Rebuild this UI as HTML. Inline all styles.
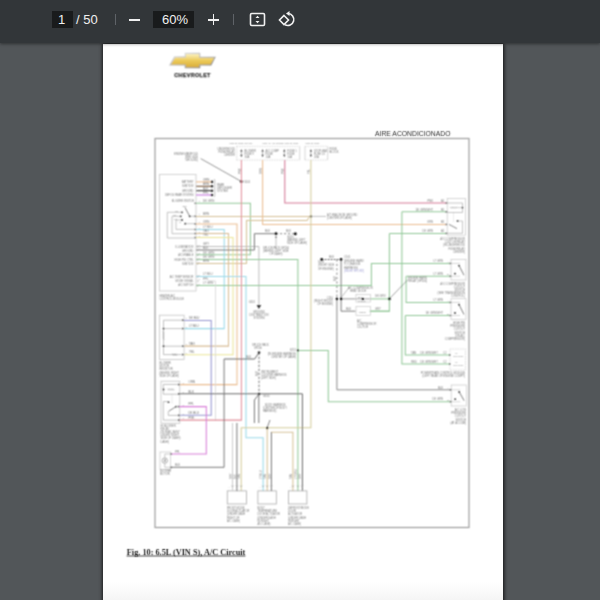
<!DOCTYPE html>
<html><head><meta charset="utf-8">
<style>
html,body{margin:0;padding:0;width:600px;height:600px;overflow:hidden;background:#525659;font-family:"Liberation Sans",sans-serif;}
#tb{position:absolute;left:0;top:0;width:600px;height:43px;background:#323639;box-shadow:0 1px 3px rgba(0,0,0,0.45);z-index:5;}
#page{position:absolute;left:103px;top:44px;width:400px;height:600px;background:linear-gradient(to bottom,#fff 0px,#fff 538px,#f5f5f5 556px);box-shadow:1px 0 4px rgba(0,0,0,0.75),-1px 0 3px rgba(0,0,0,0.45);}
.t{position:absolute;color:#f1f1f1;font-size:13px;}
</style></head><body>
<div id="page"></div>
<div id="tb">
  <div style="position:absolute;left:52px;top:11px;width:21px;height:17px;background:#191b1c;"></div>
  <div class="t" style="left:58px;top:12px;">1</div>
  <div class="t" style="left:76px;top:12px;">/ 50</div>
  <div style="position:absolute;left:115px;top:14px;width:1px;height:11px;background:#5f6368;"></div>
  <div style="position:absolute;left:129px;top:19px;width:11px;height:1.6px;background:#f1f1f1;"></div>
  <div style="position:absolute;left:153px;top:11px;width:41px;height:17px;background:#191b1c;"></div>
  <div class="t" style="left:162px;top:12px;">60%</div>
  <div style="position:absolute;left:208px;top:19px;width:11px;height:1.6px;background:#f1f1f1;"></div>
  <div style="position:absolute;left:212.7px;top:14.3px;width:1.6px;height:11px;background:#f1f1f1;"></div>
  <div style="position:absolute;left:233px;top:14px;width:1px;height:11px;background:#5f6368;"></div>
  <svg width="600" height="43" style="position:absolute;left:0;top:0">
    <rect x="250.5" y="13.5" width="14" height="12" rx="1.2" fill="none" stroke="#f1f1f1" stroke-width="1.6"/>
    <path d="M255.5 18 L257.5 15.8 L259.5 18 Z M255.5 21 L257.5 23.2 L259.5 21 Z" fill="#f1f1f1"/>
    <path d="M284 15.5 L288.5 20 L284 24.5 L279.5 20 Z" fill="none" stroke="#f1f1f1" stroke-width="1.6"/>
    <path d="M288 13.5 A6 6 0 1 1 285 24.8" fill="none" stroke="#f1f1f1" stroke-width="1.6"/>
    <path d="M286 13.5 L289.5 11 L289.5 16 Z" fill="#f1f1f1"/>
  </svg>
</div>
<svg width="600" height="100" style="position:absolute;left:0;top:0">
<defs><filter id="bl2" x="-5%" y="-5%" width="110%" height="110%"><feConvolveMatrix order="3" kernelMatrix="1 2 1 2 4 2 1 2 1" divisor="16" edgeMode="none" preserveAlpha="false"/></filter><linearGradient id="gold" x1="0" y1="0" x2="0" y2="1">
<stop offset="0" stop-color="#faf0c0"/><stop offset="0.5" stop-color="#ecca58"/><stop offset="1" stop-color="#d9ae3c"/></linearGradient>
<linearGradient id="silv" x1="0" y1="0" x2="1" y2="1"><stop offset="0" stop-color="#eeeeee"/><stop offset="1" stop-color="#7a7a7a"/></linearGradient></defs>
<g filter="url(#bl2)"><path d="M169.1,65.4 L174.2,56.2 L184.7,56.2 L184.7,52.8 L200.3,52.8 L200.3,56.7 L215.9,56.7 L211.3,65.4 L200.3,65.4 L200.3,68.3 L184.7,68.3 L184.7,65.4 Z" fill="url(#silv)"/>
<path d="M171,64.4 L175.2,57.4 L185.8,57.4 L185.8,53.9 L199.2,53.9 L199.2,57.8 L214.2,57.8 L210.5,64.4 L199.2,64.4 L199.2,67.2 L185.8,67.2 L185.8,64.4 Z" fill="url(#gold)"/>
<text x="192.5" y="76.5" font-family="Liberation Sans, sans-serif" font-weight="bold" font-size="5.3" fill="#2a2a2a" stroke="#2a2a2a" stroke-width="0.25" text-anchor="middle" letter-spacing="0.35" textLength="36.5" lengthAdjust="spacingAndGlyphs">CHEVROLET</text></g>
</svg>
<svg id="d" width="600" height="600" style="position:absolute;left:0;top:0" font-family="Liberation Sans, sans-serif"><defs><filter id="bl" x="-5%" y="-5%" width="110%" height="110%"><feConvolveMatrix order="3" kernelMatrix="1 2.0 1 2.0 4.0 2.0 1 2.0 1" divisor="16.0" edgeMode="none" preserveAlpha="false"/></filter></defs><g filter="url(#bl)"><rect x="155" y="138.5" width="314" height="389.0" stroke="#9c9c9c" stroke-width="1.2" fill="none"/><polyline points="236.7,146.3 299.7,146.3" stroke="#c4c4c4" stroke-width="0.6" fill="none" stroke-dasharray="1.5,1"/><polyline points="236.7,160 299.7,160" stroke="#c4c4c4" stroke-width="0.6" fill="none" stroke-dasharray="1.5,1"/><polyline points="236.7,146.3 236.7,160" stroke="#c4c4c4" stroke-width="0.6" fill="none" stroke-dasharray="1.5,1"/><polyline points="299.7,146.3 299.7,160" stroke="#c4c4c4" stroke-width="0.7" fill="none"/><polyline points="305,146.3 327.7,146.3" stroke="#c4c4c4" stroke-width="0.6" fill="none" stroke-dasharray="1.5,1"/><polyline points="305,160 327.7,160" stroke="#c4c4c4" stroke-width="0.6" fill="none" stroke-dasharray="1.5,1"/><polyline points="305,146.3 305,160" stroke="#c4c4c4" stroke-width="0.7" fill="none"/><polyline points="327.7,146.3 327.7,160" stroke="#c4c4c4" stroke-width="0.7" fill="none"/><path d="M240.3,151.5 L242.5,151.5 L241.4,149.3 Z M240.3,154.8 L242.5,154.8 L241.4,157 Z" fill="#333"/><polyline points="241.4,151.5 241.4,154.8" stroke="#666" stroke-width="0.5" fill="none"/><path d="M261.5,151.5 L263.70000000000005,151.5 L262.6,149.3 Z M261.5,154.8 L263.70000000000005,154.8 L262.6,157 Z" fill="#333"/><polyline points="262.6,151.5 262.6,154.8" stroke="#666" stroke-width="0.5" fill="none"/><path d="M283.2,151.5 L285.40000000000003,151.5 L284.3,149.3 Z M283.2,154.8 L285.40000000000003,154.8 L284.3,157 Z" fill="#333"/><polyline points="284.3,151.5 284.3,154.8" stroke="#666" stroke-width="0.5" fill="none"/><path d="M309.79999999999995,151.5 L312.0,151.5 L310.9,149.3 Z M309.79999999999995,154.8 L312.0,154.8 L310.9,157 Z" fill="#333"/><polyline points="310.9,151.5 310.9,154.8" stroke="#666" stroke-width="0.5" fill="none"/><polyline points="200.7,158.6 241.2,181.4" stroke="#6a6a6a" stroke-width="0.7" fill="none"/><circle cx="241.4" cy="181.4" r="1.5" fill="#111"/><rect x="159.5" y="174.4" width="36.5" height="116.6" stroke="#cfcfcf" stroke-width="0.9" fill="none"/><polyline points="196,181.9 212,181.9" stroke="#ebbd92" stroke-width="1.1" fill="none"/><circle cx="212" cy="181.9" r="1.3" fill="#333"/><polyline points="196,186.3 212,186.3" stroke="#7a5a3a" stroke-width="1.1" fill="none"/><circle cx="212" cy="186.3" r="1.3" fill="#333"/><polyline points="196,190.7 212,190.7" stroke="#333" stroke-width="1.1" fill="none"/><circle cx="212" cy="190.7" r="1.3" fill="#333"/><polyline points="196,195 212,195" stroke="#c77ae0" stroke-width="1.1" fill="none"/><circle cx="212" cy="195" r="1.3" fill="#333"/><polyline points="214,179 214.8,180 214.8,196 214,197" stroke="#999" stroke-width="0.6" fill="none"/><polyline points="182,212.3 167.3,212.3 167.3,238 196,238" stroke="#b5b5b5" stroke-width="0.8" fill="none"/><polyline points="180.7,216.3 172,216.3 172,233.7 196,233.7" stroke="#b5b5b5" stroke-width="0.8" fill="none"/><polyline points="182,220 176,220 176,229.4 196,229.4" stroke="#b5b5b5" stroke-width="0.8" fill="none"/><polyline points="185.3,223.7 196,223.7" stroke="#b5b5b5" stroke-width="0.8" fill="none"/><polyline points="189.7,216.3 185,207.5" stroke="#6a6a6a" stroke-width="0.8" fill="none"/><polyline points="189.7,216.3 196,216.3" stroke="#b5b5b5" stroke-width="0.8" fill="none"/><circle cx="182" cy="212.3" r="0.9" fill="#333"/><circle cx="180.7" cy="216.3" r="0.9" fill="#333"/><circle cx="182" cy="220" r="0.9" fill="#333"/><circle cx="185.3" cy="223.7" r="0.9" fill="#333"/><circle cx="189.7" cy="216.3" r="0.9" fill="#333"/><polyline points="196,203.3 250.4,203.3 250.4,254.8 196,254.8" stroke="#92c898" stroke-width="1.05" fill="none"/><polyline points="196,216.4 310.9,216.4" stroke="#d6c298" stroke-width="1.05" fill="none"/><circle cx="310.9" cy="216.4" r="1.2" fill="#333"/><polyline points="312,216.4 326,216.4" stroke="#999" stroke-width="0.6" fill="none"/><polyline points="309,217.5 307,220.5 246.5,220.5 246.5,263.5 196,263.5" stroke="#d6c298" stroke-width="1.05" fill="none"/><polyline points="196,224 237,224 237,384.6 179.3,384.6" stroke="#ebbd92" stroke-width="1.05" fill="none"/><polyline points="196,229.5 224.2,229.5 224.2,328.6 184,328.6" stroke="#9ad9e8" stroke-width="1.05" fill="none"/><polyline points="196,233.5 228.5,233.5 228.5,346.1 184,346.1" stroke="#d8bc94" stroke-width="1.05" fill="none"/><polyline points="196,237.5 233,237.5 233,354.8 184,354.8" stroke="#ece596" stroke-width="1.05" fill="none"/><polyline points="196,246.5 258.9,246.5 258.9,306" stroke="#b5b5b5" stroke-width="0.9" fill="none"/><path d="M256.6,305 L261.2,305 L258.9,309 Z" fill="#333"/><polyline points="196,250 254.4,250 254.4,233.7 276,233.7" stroke="#6a6a6a" stroke-width="0.9" fill="none"/><polyline points="276,233.7 295.3,233.7" stroke="#6a6a6a" stroke-width="0.8" fill="none" stroke-dasharray="2.2,1.8"/><circle cx="276" cy="233.7" r="1.4" fill="#111"/><circle cx="295.3" cy="233.7" r="1.5" fill="#111"/><circle cx="276" cy="237" r="0.8" fill="#333"/><polyline points="276,237 276,246.5" stroke="#999" stroke-width="0.6" fill="none"/><polyline points="196,259.5 297.9,259.5 297.9,491" stroke="#92c898" stroke-width="1.05" fill="none"/><polyline points="196,276.5 246,276.5 246,437.8 263.1,437.8 263.1,491" stroke="#9ad9e8" stroke-width="1.05" fill="none"/><polyline points="196,285.5 371.4,285.5 371.4,263.5 451,263.5" stroke="#92c898" stroke-width="1.05" fill="none"/><polyline points="208,281 215.5,281 215.5,421" stroke="#d4d4d4" stroke-width="0.8" fill="none"/><polyline points="241.4,160 241.4,420.1 179.3,420.1" stroke="#e2909c" stroke-width="1.05" fill="none"/><polyline points="262.6,160 262.6,224.4 447.2,224.4" stroke="#ebbd92" stroke-width="1.05" fill="none"/><polyline points="284.8,160 284.8,203 447.2,203" stroke="#d47896" stroke-width="1.05" fill="none"/><polyline points="310.9,160 310.9,427.7 241.2,427.7 241.2,491" stroke="#d4cd9c" stroke-width="1.05" fill="none"/><polyline points="267.2,427.7 267.2,491" stroke="#d6c298" stroke-width="1.05" fill="none"/><polyline points="271,432.3 292.9,432.3 292.9,491" stroke="#d6c298" stroke-width="1.05" fill="none"/><polyline points="401.9,211.8 447.2,211.8" stroke="#92c898" stroke-width="1.05" fill="none"/><polyline points="401.9,211.8 401.9,364 450,364" stroke="#92c898" stroke-width="1.05" fill="none"/><polyline points="389.4,233.4 447.2,233.4" stroke="#92c898" stroke-width="1.05" fill="none"/><polyline points="389.4,233.4 389.4,311.3 369.6,311.3" stroke="#92c898" stroke-width="1.05" fill="none"/><polyline points="406.1,276.3 451,276.3" stroke="#92c898" stroke-width="1.05" fill="none"/><polyline points="406.1,276.3 406.1,302.4 451,302.4" stroke="#92c898" stroke-width="1.05" fill="none"/><polyline points="405.3,315.4 451,315.4" stroke="#92c898" stroke-width="1.05" fill="none"/><polyline points="405.3,315.4 405.3,355 450,355" stroke="#92c898" stroke-width="1.05" fill="none"/><polyline points="297.9,350.4 328.3,350.4 328.3,401.7 451.2,401.7" stroke="#92c898" stroke-width="1.05" fill="none"/><circle cx="297.9" cy="350.4" r="1.1" fill="#333"/><polyline points="321.7,259.5 341.1,259.5" stroke="#333" stroke-width="0.8" fill="none" stroke-dasharray="1.8,1.2"/><circle cx="321.7" cy="259.5" r="1.4" fill="#111"/><circle cx="341.1" cy="259.5" r="1.4" fill="#111"/><polyline points="336.9,259.5 336.9,298.9" stroke="#6a6a6a" stroke-width="0.85" fill="none" stroke-dasharray="2,2.4"/><polyline points="336.9,298.9 336.9,389.8 451.2,389.8" stroke="#8a8a8a" stroke-width="1.0" fill="none"/><polyline points="341.1,259.5 341.1,311.2 355.6,311.2" stroke="#6a6a6a" stroke-width="0.85" fill="none"/><polyline points="341.1,298.9 355.6,298.9" stroke="#6a6a6a" stroke-width="0.7" fill="none"/><polyline points="355.6,298.9 370.5,298.9" stroke="#6a6a6a" stroke-width="0.6" fill="none"/><polyline points="370.5,298.9 389.4,298.9" stroke="#92c898" stroke-width="1.05" fill="none"/><polyline points="370.5,311.2 389.4,311.2" stroke="#92c898" stroke-width="1.05" fill="none"/><circle cx="336.9" cy="298.9" r="1.3" fill="#111"/><circle cx="341.1" cy="298.9" r="1.3" fill="#111"/><circle cx="362.8" cy="298.9" r="1.2" fill="#111"/><circle cx="389.4" cy="298.9" r="1.4" fill="#111"/><rect x="356" y="294.5" width="14.5" height="7.5" stroke="#c0c0c0" stroke-width="0.6" fill="none"/><rect x="356" y="306.5" width="14.5" height="9.0" stroke="#c0c0c0" stroke-width="0.6" fill="none"/><polyline points="342,296.5 349.5,287" stroke="#777" stroke-width="0.5" fill="none"/><rect x="447.2" y="198.5" width="18.30000000000001" height="36.69999999999999" stroke="#c6c6c6" stroke-width="0.7" fill="none"/><polyline points="447.2,203 462.5,203 462.5,212.5 447.2,212.5" stroke="#999" stroke-width="0.55" fill="none"/><circle cx="462.5" cy="207.6" r="0.9" fill="#333"/><path d="M450,207.6 l0.6,-0.7 l0.8,1.4 l0.8,-1.4 l0.8,1.4 l0.8,-1.4 l0.8,1.4 l0.8,-1.4 l0.8,1.4 l0.8,-1.4 l0.6,0.7 L462.5,207.6" fill="none" stroke="#888" stroke-width="0.4"/><polyline points="453.5,212.5 453.5,222.5" stroke="#aaa" stroke-width="0.45" fill="none" stroke-dasharray="1,1"/><polyline points="449,224.4 457,228.6" stroke="#555" stroke-width="0.7" fill="none"/><circle cx="457.6" cy="221" r="0.9" fill="#333"/><polyline points="457.6,221 462.5,221 462.5,233.3 447.2,233.3" stroke="#999" stroke-width="0.55" fill="none"/><path d="M445.6,201.9 L447.6,203 L445.6,204.1 Z" fill="#666"/><path d="M445.6,210.70000000000002 L447.6,211.8 L445.6,212.9 Z" fill="#666"/><path d="M445.6,223.3 L447.6,224.4 L445.6,225.5 Z" fill="#666"/><path d="M445.6,232.20000000000002 L447.6,233.3 L445.6,234.4 Z" fill="#666"/><rect x="451" y="259.3" width="15" height="20.69999999999999" stroke="#c6c6c6" stroke-width="0.7" fill="none"/><polyline points="451,263.4 460,263.4" stroke="#aaa" stroke-width="0.45" fill="none"/><polyline points="451,276.2 460,276.2" stroke="#aaa" stroke-width="0.45" fill="none"/><polyline points="459,265.59999999999997 464,275.2" stroke="#555" stroke-width="0.75" fill="none"/><circle cx="459" cy="265.59999999999997" r="0.9" fill="#333"/><circle cx="455" cy="273.7" r="0.9" fill="#333"/><path d="M449.6,262.29999999999995 L451.6,263.4 L449.6,264.5 Z" fill="#666"/><path d="M449.6,275.09999999999997 L451.6,276.2 L449.6,277.3 Z" fill="#666"/><rect x="451" y="298.7" width="15" height="20.600000000000023" stroke="#c6c6c6" stroke-width="0.7" fill="none"/><polyline points="451,302.4 460,302.4" stroke="#aaa" stroke-width="0.45" fill="none"/><polyline points="451,315.5 460,315.5" stroke="#aaa" stroke-width="0.45" fill="none"/><polyline points="459,304.59999999999997 464,314.5" stroke="#555" stroke-width="0.75" fill="none"/><circle cx="459" cy="304.59999999999997" r="0.9" fill="#333"/><circle cx="455" cy="313.0" r="0.9" fill="#333"/><path d="M449.6,301.29999999999995 L451.6,302.4 L449.6,303.5 Z" fill="#666"/><path d="M449.6,314.4 L451.6,315.5 L449.6,316.6 Z" fill="#666"/><rect x="450" y="349" width="15.5" height="21" stroke="#c6c6c6" stroke-width="0.6" fill="none" stroke-dasharray="1.5,1"/><rect x="451.2" y="385" width="15.100000000000023" height="21" stroke="#c6c6c6" stroke-width="0.7" fill="none"/><polyline points="451.2,389.8 460.2,389.8" stroke="#aaa" stroke-width="0.45" fill="none"/><polyline points="451.2,401.7 460.2,401.7" stroke="#aaa" stroke-width="0.45" fill="none"/><polyline points="459.2,392.0 464.2,400.7" stroke="#555" stroke-width="0.75" fill="none"/><circle cx="459.2" cy="392.0" r="0.9" fill="#333"/><circle cx="455.2" cy="399.2" r="0.9" fill="#333"/><path d="M449.8,388.7 L451.8,389.8 L449.8,390.90000000000003 Z" fill="#666"/><path d="M449.8,400.59999999999997 L451.8,401.7 L449.8,402.8 Z" fill="#666"/><path d="M449,353.9 L451,355 L449,356.1 Z" fill="#555"/><path d="M449,362.9 L451,364 L449,365.1 Z" fill="#555"/><polyline points="407.7,279.8 389.4,298.8" stroke="#6a6a6a" stroke-width="0.6" fill="none"/><rect x="159.4" y="315.2" width="24.69999999999999" height="44.19999999999999" stroke="#c4c4c4" stroke-width="0.8" fill="none"/><polyline points="184,320.2 163.5,320.2 163.5,354.6 184,354.6" stroke="#999" stroke-width="0.6" fill="none"/><polyline points="163.5,328.6 184,328.6" stroke="#999" stroke-width="0.6" fill="none"/><polyline points="163.5,346.2 184,346.2" stroke="#999" stroke-width="0.6" fill="none"/><circle cx="163.5" cy="328.6" r="0.9" fill="#333"/><circle cx="163.5" cy="346.2" r="0.9" fill="#333"/><path d="M163.5,331 l-0.8,1 l1.6,1 l-1.6,1 l1.6,1 l-1.6,1 l1.6,1 l-1.6,1 l1.6,1 l-0.8,1" fill="none" stroke="#888" stroke-width="0.4"/><path d="M172,354.6 l0.6,-0.8 l0.8,1.6 l0.8,-1.6 l0.8,1.6 l0.8,-1.6 l0.8,1.6 l0.6,-0.8" fill="none" stroke="#777" stroke-width="0.4"/><path d="M182.2,319.09999999999997 L184.2,320.2 L182.2,321.3 Z" fill="#555"/><path d="M182.2,327.5 L184.2,328.6 L182.2,329.70000000000005 Z" fill="#555"/><path d="M182.2,345.09999999999997 L184.2,346.2 L182.2,347.3 Z" fill="#555"/><path d="M182.2,353.5 L184.2,354.6 L182.2,355.70000000000005 Z" fill="#555"/><polyline points="184,320.4 211.2,320.4 211.2,415.3 179.3,415.3" stroke="#9696d0" stroke-width="1.05" fill="none"/><rect x="161" y="381.2" width="18.80000000000001" height="42.0" stroke="#c4c4c4" stroke-width="0.8" fill="none"/><polyline points="179.8,384.4 163.3,384.4 163.3,394.2 179.8,394.2" stroke="#999" stroke-width="0.6" fill="none"/><circle cx="163.5" cy="389.5" r="0.9" fill="#333"/><path d="M167.5,389.5 l0.6,-0.8 l0.8,1.6 l0.8,-1.6 l0.8,1.6 l0.8,-1.6 l0.8,1.6 l0.8,-1.6 l0.8,1.6 l0.6,-0.8" fill="none" stroke="#888" stroke-width="0.4"/><polyline points="172,394.2 172,404" stroke="#aaa" stroke-width="0.5" fill="none" stroke-dasharray="1,1"/><circle cx="168.5" cy="402.2" r="0.9" fill="#333"/><circle cx="176" cy="406.6" r="0.9" fill="#333"/><polyline points="176,406.6 168.8,411.2" stroke="#555" stroke-width="0.7" fill="none"/><polyline points="168.3,411.2 168.3,415.4 179.8,415.4" stroke="#999" stroke-width="0.6" fill="none"/><polyline points="168.3,401.6 163.3,401.6 163.3,420.1 179.8,420.1" stroke="#999" stroke-width="0.6" fill="none"/><polyline points="176,406.6 179.8,406.6" stroke="#999" stroke-width="0.6" fill="none"/><path d="M178,383.5 L180,384.6 L178,385.70000000000005 Z" fill="#555"/><path d="M178,392.7 L180,393.8 L178,394.90000000000003 Z" fill="#555"/><path d="M178,405.5 L180,406.6 L178,407.70000000000005 Z" fill="#555"/><path d="M178,414.2 L180,415.3 L178,416.40000000000003 Z" fill="#555"/><path d="M178,419.0 L180,420.1 L178,421.20000000000005 Z" fill="#555"/><polyline points="179.3,393.8 302.4,393.8 302.4,491" stroke="#6a6a6a" stroke-width="1.0" fill="none"/><polyline points="179.3,406.6 206.3,406.6 206.3,454 171,454" stroke="#d87ed8" stroke-width="1.05" fill="none"/><polyline points="224.1,359 254.6,359 259,352.6" stroke="#6a6a6a" stroke-width="1.0" fill="none"/><polyline points="224.1,359 224.1,467.3 171,467.3" stroke="#6a6a6a" stroke-width="0.9" fill="none"/><polyline points="259,352.6 259,394" stroke="#6a6a6a" stroke-width="0.9" fill="none" stroke-dasharray="2.4,1.6"/><circle cx="259" cy="352.6" r="1.3" fill="#333"/><circle cx="259" cy="394" r="1.3" fill="#333"/><polyline points="259,394 254.4,400 254.4,423" stroke="#6a6a6a" stroke-width="0.9" fill="none"/><polyline points="258.8,394 258.8,423" stroke="#6a6a6a" stroke-width="0.9" fill="none"/><polyline points="270,420 267,428" stroke="#6a6a6a" stroke-width="0.8" fill="none"/><circle cx="267.2" cy="428" r="1.2" fill="#333"/><rect x="160" y="452" width="10.699999999999989" height="17.30000000000001" stroke="#c6c6c6" stroke-width="0.7" fill="none"/><circle cx="164.8" cy="460.6" r="2.7" fill="none" stroke="#777" stroke-width="0.6"/><polyline points="164.8,454 170.7,454" stroke="#999" stroke-width="0.5" fill="none"/><polyline points="164.8,467.3 170.7,467.3" stroke="#999" stroke-width="0.5" fill="none"/><polyline points="164.8,454 164.8,457.9" stroke="#999" stroke-width="0.5" fill="none"/><polyline points="164.8,463.3 164.8,467.3" stroke="#999" stroke-width="0.5" fill="none"/><path d="M171.8,452.9 L169.8,454 L171.8,455.1 Z" fill="#666"/><path d="M171.8,466.2 L169.8,467.3 L171.8,468.40000000000003 Z" fill="#666"/><rect x="227.3" y="490.9" width="19.19999999999999" height="13.100000000000023" stroke="#aaa" stroke-width="0.8" fill="none"/><rect x="257.9" y="490.9" width="18.400000000000034" height="13.100000000000023" stroke="#aaa" stroke-width="0.8" fill="none"/><rect x="288.5" y="490.9" width="18.399999999999977" height="13.100000000000023" stroke="#aaa" stroke-width="0.8" fill="none"/><polyline points="232.5,423 232.5,491" stroke="#c8c8c8" stroke-width="0.9" fill="none"/><polyline points="236.9,423 236.9,491" stroke="#6a6a6a" stroke-width="0.9" fill="none"/><polyline points="271.4,432 271.4,491" stroke="#6a6a6a" stroke-width="0.9" fill="none"/><path d="M194.6,202.3 L196.4,203.3 L194.6,204.3 Z" fill="#555"/><path d="M194.6,215.3 L196.4,216.3 L194.6,217.3 Z" fill="#555"/><path d="M194.6,223.0 L196.4,224 L194.6,225.0 Z" fill="#555"/><path d="M194.6,228.5 L196.4,229.5 L194.6,230.5 Z" fill="#555"/><path d="M194.6,232.5 L196.4,233.5 L194.6,234.5 Z" fill="#555"/><path d="M194.6,236.5 L196.4,237.5 L194.6,238.5 Z" fill="#555"/><path d="M197,245.3 L198.6,246.5 L197,247.7" fill="none" stroke="#999" stroke-width="0.5"/><path d="M197,248.8 L198.6,250 L197,251.2" fill="none" stroke="#999" stroke-width="0.5"/><path d="M197,253.60000000000002 L198.6,254.8 L197,256.0" fill="none" stroke="#999" stroke-width="0.5"/><path d="M197,258.3 L198.6,259.5 L197,260.7" fill="none" stroke="#999" stroke-width="0.5"/><path d="M197,262.3 L198.6,263.5 L197,264.7" fill="none" stroke="#999" stroke-width="0.5"/><path d="M197,275.3 L198.6,276.5 L197,277.7" fill="none" stroke="#999" stroke-width="0.5"/><path d="M197,279.8 L198.6,281 L197,282.2" fill="none" stroke="#999" stroke-width="0.5"/><path d="M197,284.3 L198.6,285.5 L197,286.7" fill="none" stroke="#999" stroke-width="0.5"/><path d="M231.5,485.5 L232.5,487 L233.5,485.5" fill="none" stroke="#999" stroke-width="0.5"/><path d="M235.9,485.5 L236.9,487 L237.9,485.5" fill="none" stroke="#999" stroke-width="0.5"/><path d="M240.2,485.5 L241.2,487 L242.2,485.5" fill="none" stroke="#999" stroke-width="0.5"/><path d="M262.1,485.5 L263.1,487 L264.1,485.5" fill="none" stroke="#999" stroke-width="0.5"/><path d="M266.2,485.5 L267.2,487 L268.2,485.5" fill="none" stroke="#999" stroke-width="0.5"/><path d="M270.4,485.5 L271.4,487 L272.4,485.5" fill="none" stroke="#999" stroke-width="0.5"/><path d="M291.9,485.5 L292.9,487 L293.9,485.5" fill="none" stroke="#999" stroke-width="0.5"/><path d="M296.9,485.5 L297.9,487 L298.9,485.5" fill="none" stroke="#999" stroke-width="0.5"/><path d="M301.2,485.5 L302.2,487 L303.2,485.5" fill="none" stroke="#999" stroke-width="0.5"/><text x="229" y="144.3" font-size="2.45" fill="#777" text-anchor="start">HOT IN RUN, START</text><text x="262" y="144.3" font-size="2.45" fill="#777" text-anchor="start">HOT AT ALL TIMES  HOT IN RUN</text><text x="305" y="144.3" font-size="2.45" fill="#777" text-anchor="start">HOT IN RUN</text><text x="235" y="150" font-size="2.7" fill="#777" text-anchor="end">UNDERHOOD</text><text x="235" y="153.2" font-size="2.7" fill="#777" text-anchor="end">FUSE/RELAY</text><text x="235" y="156.4" font-size="2.7" fill="#777" text-anchor="end">CENTER</text><text x="244.4" y="151.5" font-size="2.7" fill="#777" text-anchor="start">BLOWER</text><text x="244.4" y="154.7" font-size="2.7" fill="#777" text-anchor="start">FUSE 9</text><text x="244.4" y="157.9" font-size="2.7" fill="#777" text-anchor="start">30A</text><text x="265.6" y="151.5" font-size="2.7" fill="#777" text-anchor="start">A/C COMP</text><text x="265.6" y="154.7" font-size="2.7" fill="#777" text-anchor="start">FUSE</text><text x="265.6" y="157.9" font-size="2.7" fill="#777" text-anchor="start">10A</text><text x="287.3" y="151.5" font-size="2.7" fill="#777" text-anchor="start">FUSE 1</text><text x="287.3" y="154.7" font-size="2.7" fill="#777" text-anchor="start">FUSE</text><text x="287.3" y="157.9" font-size="2.7" fill="#777" text-anchor="start">10A</text><text x="313.9" y="151.5" font-size="2.7" fill="#777" text-anchor="start">STOP-HAZ</text><text x="313.9" y="154.7" font-size="2.7" fill="#777" text-anchor="start">FUSE 13</text><text x="313.9" y="157.9" font-size="2.7" fill="#777" text-anchor="start">20A</text><text x="329.5" y="149.8" font-size="2.7" fill="#777" text-anchor="start">FUSE</text><text x="329.5" y="153" font-size="2.7" fill="#777" text-anchor="start">BLOCK</text><text x="0" y="0" font-size="2.7" fill="#777" transform="translate(240.6,174) rotate(-90)">PNK</text><text x="0" y="0" font-size="2.7" fill="#777" transform="translate(261.8,174) rotate(-90)">ORN</text><text x="0" y="0" font-size="2.7" fill="#777" transform="translate(283.5,174) rotate(-90)">PNK</text><text x="0" y="0" font-size="2.7" fill="#777" transform="translate(310.09999999999997,174) rotate(-90)">YEL</text><text x="244" y="182.5" font-size="2.7" fill="#777" text-anchor="start">S101</text><text x="198" y="155" font-size="2.6" fill="#777" text-anchor="end">ENGINE MANIFOLD</text><text x="198" y="158.2" font-size="2.6" fill="#777" text-anchor="end">(SEE G100</text><text x="198" y="161.4" font-size="2.6" fill="#777" text-anchor="end">GROUND)</text><text x="193.5" y="183" font-size="2.6" fill="#777" text-anchor="end">BATTERY</text><text x="193.5" y="187.3" font-size="2.6" fill="#777" text-anchor="end">IGNITION</text><text x="193.5" y="191.7" font-size="2.6" fill="#777" text-anchor="end">GROUND</text><text x="193.5" y="196" font-size="2.6" fill="#777" text-anchor="end">DEFOG REAR SYSTEM</text><text x="194" y="201.6" font-size="2.6" fill="#777" text-anchor="end">BLOWER SWITCH</text><text x="193.5" y="248" font-size="2.6" fill="#777" text-anchor="end">ILLUMINATION</text><text x="193.5" y="251.5" font-size="2.6" fill="#777" text-anchor="end">GROUND</text><text x="193.5" y="255.8" font-size="2.6" fill="#777" text-anchor="end">A/C ENABLE</text><text x="193.5" y="260.5" font-size="2.6" fill="#777" text-anchor="end">HIGH PSI CTRL</text><text x="193.5" y="264.5" font-size="2.6" fill="#777" text-anchor="end">IGNITION</text><text x="193.5" y="277.6" font-size="2.6" fill="#777" text-anchor="end">A/C TEMP SENSOR</text><text x="193.5" y="281.9" font-size="2.6" fill="#777" text-anchor="end">MODE SIGNAL</text><text x="193.5" y="286.4" font-size="2.6" fill="#777" text-anchor="end">A/C SWITCH</text><text x="159.5" y="296.5" font-size="2.6" fill="#777" text-anchor="start">HEATER-A/C</text><text x="159.5" y="299.7" font-size="2.6" fill="#777" text-anchor="start">CONTROL MODULE</text><text x="217" y="186" font-size="2.6" fill="#777" text-anchor="start">REAR</text><text x="217" y="189.2" font-size="2.6" fill="#777" text-anchor="start">DEFOGGER</text><text x="217" y="192.4" font-size="2.6" fill="#777" text-anchor="start">SYSTEM</text><text x="327" y="215.5" font-size="2.6" fill="#777" text-anchor="start">A/T HVAC/ECM GROUND</text><text x="327" y="218.7" font-size="2.6" fill="#777" text-anchor="start">(CENTER OF DASH)</text><text x="255" y="303" font-size="2.6" fill="#777" text-anchor="end">G201</text><text x="259" y="313" font-size="2.7" fill="#777" text-anchor="middle">GROUND</text><text x="259" y="316.2" font-size="2.7" fill="#777" text-anchor="middle">DISTRIBUTION</text><text x="259" y="319.4" font-size="2.7" fill="#777" text-anchor="middle">SYSTEM</text><text x="265" y="232.2" font-size="2.7" fill="#777" text-anchor="start">BLK</text><text x="286" y="232.2" font-size="2.7" fill="#777" text-anchor="start">BLK</text><text x="287" y="237.8" font-size="2.7" fill="#777" text-anchor="start">G200</text><text x="287" y="241" font-size="2.7" fill="#777" text-anchor="start">(BEHIND LEFT</text><text x="287" y="244.2" font-size="2.7" fill="#777" text-anchor="start">SIDE OF DASH)</text><text x="276" y="248.5" font-size="2.7" fill="#777" text-anchor="middle">SPLICE PACK SP200</text><text x="276" y="251.7" font-size="2.7" fill="#777" text-anchor="middle">(BEHIND LEFT SIDE</text><text x="276" y="254.9" font-size="2.7" fill="#777" text-anchor="middle">OF DASH)</text><text x="329" y="257.6" font-size="2.7" fill="#777" text-anchor="start">BLK</text><text x="0" y="0" font-size="2.7" fill="#777" transform="translate(336,281) rotate(-90)">BLK</text><text x="318" y="263" font-size="2.7" fill="#777" text-anchor="start">S102</text><text x="318" y="266.3" font-size="2.7" fill="#777" text-anchor="start">(RIGHT SIDE</text><text x="318" y="269.6" font-size="2.7" fill="#777" text-anchor="start">OF ENGINE)</text><text x="344" y="258.3" font-size="2.7" fill="#777" text-anchor="start">C101</text><text x="344" y="262" font-size="2.7" fill="#777" text-anchor="start">(ENGINE HARN</text><text x="344" y="265.3" font-size="2.7" fill="#777" text-anchor="start">TO CHASSIS</text><text x="344" y="268.6" font-size="2.7" fill="#777" text-anchor="start">HARNESS)</text><text x="344" y="271.9" font-size="2.7" fill="#9a9ad0" text-anchor="start">(RIGHT FRONT)</text><text x="348" y="288.5" font-size="2.7" fill="#777" text-anchor="start">A/C COMPRESSOR</text><text x="350" y="291.8" font-size="2.7" fill="#777" text-anchor="start">HEAT DIODE</text><text x="333" y="298.5" font-size="2.7" fill="#777" text-anchor="end">C110</text><text x="333" y="301.8" font-size="2.7" fill="#777" text-anchor="end">(RIGHT FRONT</text><text x="333" y="305.1" font-size="2.7" fill="#777" text-anchor="end">OF ENGINE)</text><text x="358" y="297.5" font-size="2.4" fill="#777" text-anchor="start">BLK</text><text x="358" y="302" font-size="2.4" fill="#777" text-anchor="start">DIODE</text><text x="359" y="312.5" font-size="2.4" fill="#777" text-anchor="start">COMP</text><text x="357" y="321.5" font-size="2.7" fill="#777" text-anchor="start">A/C</text><text x="357" y="324.8" font-size="2.7" fill="#777" text-anchor="start">COMPRESSOR</text><text x="357" y="328.1" font-size="2.7" fill="#777" text-anchor="start">CLUTCH</text><text x="375" y="297.3" font-size="2.7" fill="#777" text-anchor="start">DK GRN</text><text x="375" y="309.6" font-size="2.7" fill="#777" text-anchor="start">GRY</text><text x="346" y="309.6" font-size="2.7" fill="#777" text-anchor="start">BLK</text><text x="465" y="240.0" font-size="2.7" fill="#777" text-anchor="end">A/C COMPRESSOR</text><text x="465" y="243.2" font-size="2.7" fill="#777" text-anchor="end">CLUTCH RELAY</text><text x="465" y="246.4" font-size="2.7" fill="#777" text-anchor="end">(IN UNDERHOOD</text><text x="465" y="249.6" font-size="2.7" fill="#777" text-anchor="end">FUSE/RELAY</text><text x="465" y="252.8" font-size="2.7" fill="#777" text-anchor="end">CENTER)</text><text x="447" y="262.59999999999997" font-size="2.5" fill="#888" text-anchor="start">A</text><text x="447" y="275.4" font-size="2.5" fill="#888" text-anchor="start">B</text><text x="465" y="284.5" font-size="2.7" fill="#777" text-anchor="end">A/C COMPRESSOR</text><text x="465" y="287.7" font-size="2.7" fill="#777" text-anchor="end">CUTOUT</text><text x="465" y="290.9" font-size="2.7" fill="#777" text-anchor="end">SWITCH</text><text x="465" y="294.1" font-size="2.7" fill="#777" text-anchor="end">(SEE TRANSMISSION</text><text x="465" y="297.3" font-size="2.7" fill="#777" text-anchor="end">CONTROL)</text><text x="447" y="301.59999999999997" font-size="2.5" fill="#888" text-anchor="start">A</text><text x="447" y="314.7" font-size="2.5" fill="#888" text-anchor="start">B</text><text x="465" y="324.0" font-size="2.7" fill="#777" text-anchor="end">HIGH PSI</text><text x="465" y="327.2" font-size="2.7" fill="#777" text-anchor="end">PRESSURE</text><text x="465" y="330.4" font-size="2.7" fill="#777" text-anchor="end">CUTOUT</text><text x="465" y="333.6" font-size="2.7" fill="#777" text-anchor="end">SWITCH</text><text x="465" y="336.8" font-size="2.7" fill="#777" text-anchor="end">(ON A/C</text><text x="465" y="340.0" font-size="2.7" fill="#777" text-anchor="end">COMPRESSOR)</text><text x="465" y="374" font-size="2.7" fill="#777" text-anchor="end">POWERTRAIN CONTROL MODULE</text><text x="465" y="377.2" font-size="2.7" fill="#777" text-anchor="end">(LEFT REAR OF ENGINE COMPT)</text><text x="447.2" y="389.0" font-size="2.5" fill="#888" text-anchor="start">A</text><text x="447.2" y="400.9" font-size="2.5" fill="#888" text-anchor="start">B</text><text x="466" y="411.0" font-size="2.7" fill="#777" text-anchor="end">A/C LOW</text><text x="466" y="414.2" font-size="2.7" fill="#777" text-anchor="end">PRESSURE</text><text x="466" y="417.4" font-size="2.7" fill="#777" text-anchor="end">CUTOUT</text><text x="466" y="420.6" font-size="2.7" fill="#777" text-anchor="end">SWITCH</text><text x="466" y="423.8" font-size="2.7" fill="#777" text-anchor="end">(AT ACCUM)</text><text x="433" y="201.7" font-size="2.7" fill="#777" text-anchor="end">PNK</text><text x="441" y="201.7" font-size="2.7" fill="#777" text-anchor="start">A1</text><text x="433" y="210.5" font-size="2.7" fill="#777" text-anchor="end">DK GRN/WHT</text><text x="441" y="210.5" font-size="2.7" fill="#777" text-anchor="start">B1</text><text x="433" y="223.1" font-size="2.7" fill="#777" text-anchor="end">ORN</text><text x="441" y="223.1" font-size="2.7" fill="#777" text-anchor="start">B2</text><text x="433" y="232.0" font-size="2.7" fill="#777" text-anchor="end">DK GRN</text><text x="441" y="232.0" font-size="2.7" fill="#777" text-anchor="start">A2</text><text x="443" y="262.09999999999997" font-size="2.7" fill="#777" text-anchor="end">LT GRN</text><text x="443" y="274.9" font-size="2.7" fill="#777" text-anchor="end">LT GRN</text><text x="443" y="301.09999999999997" font-size="2.7" fill="#777" text-anchor="end">LT GRN</text><text x="443" y="314.2" font-size="2.7" fill="#777" text-anchor="end">DK GRN/WHT</text><text x="411" y="353.6" font-size="2.7" fill="#777" text-anchor="start">TAN</text><text x="420.5" y="353.6" font-size="2.7" fill="#777" text-anchor="start">DK GRN/WHT</text><text x="443" y="353.6" font-size="2.7" fill="#777" text-anchor="start">C2</text><text x="411" y="362.6" font-size="2.7" fill="#777" text-anchor="start">RED</text><text x="420.5" y="362.6" font-size="2.7" fill="#777" text-anchor="start">DK GRN/WHT</text><text x="443" y="362.6" font-size="2.7" fill="#777" text-anchor="start">C2</text><text x="455" y="354.2" font-size="2.4" fill="#888" text-anchor="start">47</text><text x="453" y="357.4" font-size="2.2" fill="#999" text-anchor="start">REQUEST</text><text x="455" y="363.2" font-size="2.4" fill="#888" text-anchor="start">47</text><text x="453" y="366.4" font-size="2.2" fill="#999" text-anchor="start">REQUEST</text><text x="443" y="388.5" font-size="2.7" fill="#777" text-anchor="end">BLK</text><text x="443" y="400.4" font-size="2.7" fill="#777" text-anchor="end">DK GRN</text><text x="408" y="279" font-size="2.7" fill="#777" text-anchor="start">ENGINE HARN</text><text x="408" y="282.2" font-size="2.7" fill="#777" text-anchor="start">RELAY (SP200)</text><text x="189" y="319.0" font-size="2.9" fill="#666" text-anchor="start">DK BLU</text><text x="185.5" y="319.4" font-size="2.3" fill="#888" text-anchor="start">1</text><text x="189" y="327.40000000000003" font-size="2.9" fill="#666" text-anchor="start">LT BLU</text><text x="185.5" y="327.8" font-size="2.3" fill="#888" text-anchor="start">1</text><text x="189" y="345.0" font-size="2.9" fill="#666" text-anchor="start">TAN</text><text x="185.5" y="345.4" font-size="2.3" fill="#888" text-anchor="start">1</text><text x="189" y="353.40000000000003" font-size="2.9" fill="#666" text-anchor="start">YEL</text><text x="185.5" y="353.8" font-size="2.3" fill="#888" text-anchor="start">1</text><text x="159.5" y="364.0" font-size="2.6" fill="#777" text-anchor="start">BLOWER</text><text x="159.5" y="367.2" font-size="2.6" fill="#777" text-anchor="start">MOTOR</text><text x="159.5" y="370.4" font-size="2.6" fill="#777" text-anchor="start">RESISTOR</text><text x="159.5" y="373.6" font-size="2.6" fill="#777" text-anchor="start">(BEHIND RIGHT</text><text x="159.5" y="376.8" font-size="2.6" fill="#777" text-anchor="start">SIDE OF DASH)</text><text x="188.5" y="383.40000000000003" font-size="2.9" fill="#666" text-anchor="start">ORN</text><text x="182.5" y="383.8" font-size="2.3" fill="#888" text-anchor="start">1</text><text x="188.5" y="392.6" font-size="2.9" fill="#666" text-anchor="start">BLK</text><text x="182.5" y="393.0" font-size="2.3" fill="#888" text-anchor="start">1</text><text x="188.5" y="405.40000000000003" font-size="2.9" fill="#666" text-anchor="start">PPL</text><text x="182.5" y="405.8" font-size="2.3" fill="#888" text-anchor="start">1</text><text x="188.5" y="414.1" font-size="2.9" fill="#666" text-anchor="start">DK BLU</text><text x="182.5" y="414.5" font-size="2.3" fill="#888" text-anchor="start">1</text><text x="188.5" y="418.90000000000003" font-size="2.9" fill="#666" text-anchor="start">PNK</text><text x="182.5" y="419.3" font-size="2.3" fill="#888" text-anchor="start">1</text><text x="0" y="0" font-size="2.7" fill="#777" transform="translate(258,376) rotate(-90)">BLK</text><text x="246" y="357.5" font-size="2.7" fill="#777" text-anchor="start">BLK</text><text x="160.5" y="426.5" font-size="2.7" fill="#777" text-anchor="start">HI BLOWER</text><text x="160.5" y="429.7" font-size="2.7" fill="#777" text-anchor="start">RELAY</text><text x="160.5" y="432.9" font-size="2.7" fill="#777" text-anchor="start">(IN HVAC ASSY</text><text x="160.5" y="436.1" font-size="2.7" fill="#777" text-anchor="start">UNDER RIGHT</text><text x="160.5" y="439.3" font-size="2.7" fill="#777" text-anchor="start">SIDE OF DASH)</text><text x="160.5" y="442.5" font-size="2.7" fill="#777" text-anchor="start">DASH)</text><text x="164.8" y="461.8" font-size="2.6" fill="#555" text-anchor="middle">M</text><text x="175" y="452.6" font-size="2.7" fill="#777" text-anchor="start">PPL</text><text x="175" y="466" font-size="2.7" fill="#777" text-anchor="start">BLK</text><text x="160" y="472" font-size="2.6" fill="#777" text-anchor="start">BLOWER</text><text x="160" y="475.2" font-size="2.6" fill="#777" text-anchor="start">MOTOR</text><text x="252" y="346" font-size="2.6" fill="#777" text-anchor="start">SPLICE PACK</text><text x="254" y="349.2" font-size="2.6" fill="#777" text-anchor="start">SP200</text><text x="296" y="351" font-size="2.7" fill="#777" text-anchor="end">S213</text><text x="296" y="354.6" font-size="2.7" fill="#777" text-anchor="end">(IN ENGINE HARNESS</text><text x="296" y="357.8" font-size="2.7" fill="#777" text-anchor="end">CENTER OF DASH)</text><text x="261" y="373" font-size="2.6" fill="#777" text-anchor="start">INSTRUMENT</text><text x="261" y="376.2" font-size="2.6" fill="#777" text-anchor="start">CLUSTER HARNESS</text><text x="261" y="379.4" font-size="2.6" fill="#777" text-anchor="start">(LEFT SIDE)</text><text x="263" y="397" font-size="2.6" fill="#777" text-anchor="start">G104</text><text x="265" y="406" font-size="2.6" fill="#777" text-anchor="start">BODY HARNESS</text><text x="263" y="409.2" font-size="2.6" fill="#777" text-anchor="start">(CENTER OF BODY</text><text x="263" y="412.4" font-size="2.6" fill="#777" text-anchor="start">HARNESS)</text><text x="227" y="509.0" font-size="2.6" fill="#777" text-anchor="start">FRONT MODE</text><text x="227" y="512.2" font-size="2.6" fill="#777" text-anchor="start">DOOR ACTUATOR</text><text x="227" y="515.4" font-size="2.6" fill="#777" text-anchor="start">(UNDER DASH</text><text x="227" y="518.6" font-size="2.6" fill="#777" text-anchor="start">RIGHT OF</text><text x="227" y="521.8" font-size="2.6" fill="#777" text-anchor="start">A/C CASE)</text><text x="257.5" y="509.0" font-size="2.6" fill="#777" text-anchor="start">BODY</text><text x="257.5" y="512.2" font-size="2.6" fill="#777" text-anchor="start">TEMPERATURE</text><text x="257.5" y="515.4" font-size="2.6" fill="#777" text-anchor="start">DOOR ACTUATOR</text><text x="257.5" y="518.6" font-size="2.6" fill="#777" text-anchor="start">(UNDER DASH</text><text x="257.5" y="521.8" font-size="2.6" fill="#777" text-anchor="start">IN RIGHT</text><text x="257.5" y="525.0" font-size="2.6" fill="#777" text-anchor="start">A/C CASE)</text><text x="288" y="509.0" font-size="2.6" fill="#777" text-anchor="start">DEFROST/MODE</text><text x="288" y="512.2" font-size="2.6" fill="#777" text-anchor="start">DOOR</text><text x="288" y="515.4" font-size="2.6" fill="#777" text-anchor="start">ACTUATOR</text><text x="288" y="518.6" font-size="2.6" fill="#777" text-anchor="start">(UNDER DASH</text><text x="288" y="521.8" font-size="2.6" fill="#777" text-anchor="start">IN RIGHT</text><text x="288" y="525.0" font-size="2.6" fill="#777" text-anchor="start">A/C CASE)</text><text x="203" y="202.0" font-size="2.9" fill="#777" text-anchor="start">DK GRN</text><text x="198.5" y="202.3" font-size="2.4" fill="#999" text-anchor="start">1</text><text x="203" y="215.0" font-size="2.9" fill="#777" text-anchor="start">BRN</text><text x="198.5" y="215.3" font-size="2.4" fill="#999" text-anchor="start">1</text><text x="203" y="222.7" font-size="2.9" fill="#777" text-anchor="start">ORN</text><text x="198.5" y="223.0" font-size="2.4" fill="#999" text-anchor="start">1</text><text x="203" y="228.2" font-size="2.9" fill="#777" text-anchor="start">LT BLU</text><text x="198.5" y="228.5" font-size="2.4" fill="#999" text-anchor="start">1</text><text x="203" y="232.2" font-size="2.9" fill="#777" text-anchor="start">TAN</text><text x="198.5" y="232.5" font-size="2.4" fill="#999" text-anchor="start">1</text><text x="203" y="236.2" font-size="2.9" fill="#777" text-anchor="start">YEL</text><text x="198.5" y="236.5" font-size="2.4" fill="#999" text-anchor="start">1</text><text x="203" y="245.2" font-size="2.9" fill="#777" text-anchor="start">GRY</text><text x="198.5" y="245.5" font-size="2.4" fill="#999" text-anchor="start">1</text><text x="203" y="248.7" font-size="2.9" fill="#777" text-anchor="start">BLK</text><text x="198.5" y="249.0" font-size="2.4" fill="#999" text-anchor="start">1</text><text x="203" y="253.5" font-size="2.9" fill="#777" text-anchor="start">DK GRN</text><text x="198.5" y="253.8" font-size="2.4" fill="#999" text-anchor="start">1</text><text x="203" y="258.2" font-size="2.9" fill="#777" text-anchor="start">DK GRN</text><text x="198.5" y="258.5" font-size="2.4" fill="#999" text-anchor="start">1</text><text x="203" y="262.2" font-size="2.9" fill="#777" text-anchor="start">BRN</text><text x="198.5" y="262.5" font-size="2.4" fill="#999" text-anchor="start">1</text><text x="203" y="275.2" font-size="2.9" fill="#777" text-anchor="start">LT BLU</text><text x="198.5" y="275.5" font-size="2.4" fill="#999" text-anchor="start">1</text><text x="203" y="279.7" font-size="2.9" fill="#777" text-anchor="start">PPL</text><text x="198.5" y="280.0" font-size="2.4" fill="#999" text-anchor="start">1</text><text x="203" y="284.2" font-size="2.9" fill="#777" text-anchor="start">LT GRN</text><text x="198.5" y="284.5" font-size="2.4" fill="#999" text-anchor="start">1</text><text x="197.5" y="209" font-size="2.5" fill="#777" text-anchor="start">·</text><text x="197.5" y="212" font-size="2.5" fill="#777" text-anchor="start">·</text><text x="197.5" y="242" font-size="2.5" fill="#777" text-anchor="start">·</text><text x="197.5" y="268" font-size="2.5" fill="#777" text-anchor="start">·</text><text x="197.5" y="272" font-size="2.5" fill="#777" text-anchor="start">·</text><text x="197.5" y="289" font-size="2.5" fill="#777" text-anchor="start">·</text><text x="203" y="180.9" font-size="2.9" fill="#666" text-anchor="start">ORN</text><text x="203" y="185.3" font-size="2.9" fill="#666" text-anchor="start">BRN</text><text x="203" y="189.7" font-size="2.9" fill="#666" text-anchor="start">BLK</text><text x="203" y="194.0" font-size="2.9" fill="#666" text-anchor="start">PPL</text><text x="178" y="211.5" font-size="2.3" fill="#777" text-anchor="end">LO</text><text x="176.5" y="215.5" font-size="2.3" fill="#777" text-anchor="end">M1</text><text x="177" y="219.5" font-size="2.3" fill="#777" text-anchor="end">M2</text><text x="181" y="223" font-size="2.3" fill="#777" text-anchor="end">HI</text><text x="187" y="207" font-size="2.3" fill="#777" text-anchor="end">OFF</text><text x="0" y="0" font-size="2.6" fill="#888" transform="translate(231.6,479) rotate(-90)">GRY</text><text x="0" y="0" font-size="2.6" fill="#888" transform="translate(236.0,479) rotate(-90)">BLK</text><text x="0" y="0" font-size="2.6" fill="#888" transform="translate(240.29999999999998,479) rotate(-90)">TAN</text><text x="0" y="0" font-size="2.6" fill="#888" transform="translate(262.20000000000005,479) rotate(-90)">LT BLU</text><text x="0" y="0" font-size="2.6" fill="#888" transform="translate(266.3,479) rotate(-90)">TAN</text><text x="0" y="0" font-size="2.6" fill="#888" transform="translate(270.5,479) rotate(-90)">GRY</text><text x="0" y="0" font-size="2.6" fill="#888" transform="translate(292.0,479) rotate(-90)">TAN</text><text x="0" y="0" font-size="2.6" fill="#888" transform="translate(297.0,479) rotate(-90)">LT GRN</text><text x="0" y="0" font-size="2.6" fill="#888" transform="translate(301.3,479) rotate(-90)">GRY</text><text x="228.5" y="487.5" font-size="2.2" fill="#999" text-anchor="start">A</text><text x="259.5" y="487.5" font-size="2.2" fill="#999" text-anchor="start">A</text><text x="290" y="487.5" font-size="2.2" fill="#999" text-anchor="start">A</text></g></svg>
<svg width="600" height="600" style="position:absolute;left:0;top:0"><defs><filter id="bl3" x="-5%" y="-20%" width="110%" height="140%"><feConvolveMatrix order="3" kernelMatrix="1 4 1 4 16 4 1 4 1" divisor="36" edgeMode="none" preserveAlpha="false"/></filter></defs>
<g filter="url(#bl3)">
<text x="375" y="136.2" font-family="Liberation Sans, sans-serif" font-size="7.4" fill="#2a2a2a" textLength="75.5" lengthAdjust="spacingAndGlyphs">AIRE ACONDICIONADO</text>
<text x="126.8" y="555" font-family="Liberation Serif, serif" font-weight="bold" font-size="8.4" fill="#1e1e1e" textLength="118.5" lengthAdjust="spacingAndGlyphs">Fig. 10: 6.5L (VIN S), A/C Circuit</text>
<rect x="126.5" y="555.6" width="119" height="0.8" fill="#1e1e1e"/>
</g></svg>

</body></html>
